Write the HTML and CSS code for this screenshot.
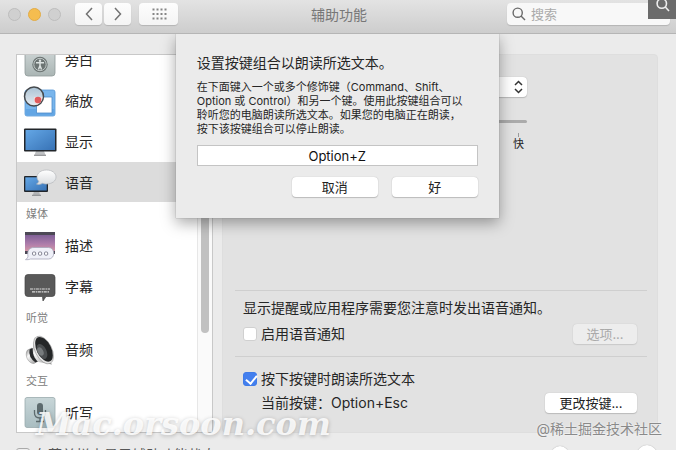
FILE: index.html
```html
<!DOCTYPE html>
<html lang="zh-CN">
<head>
<meta charset="utf-8">
<title>辅助功能</title>
<link rel="stylesheet" href="styles.css">
</head>
<body>
<div class="window">
  <header class="toolbar">
    <div class="toolbar-left">
      <div class="lights"><i class="light"></i><i class="light light-amber"></i><i class="light"></i></div>
      <div class="nav">
        <button class="tool" aria-label="后退"><svg width="8" height="14" viewBox="0 0 8 14"><path d="M7 1 1.5 7 7 13"/></svg></button>
        <button class="tool" aria-label="前进"><svg width="8" height="14" viewBox="0 0 8 14"><path d="M1 1 6.500 7 1 13"/></svg></button>
      </div>
      <button class="tool tool-grid" aria-label="显示全部">
        <svg width="16" height="12" viewBox="0 0 16 12"><path class="dots" d="M1.500 1.500h14M1.500 6h14M1.500 10.500h14"/></svg>
      </button>
    </div>
    <h1 class="title">辅助功能</h1>
    <label class="search">
      <svg width="14" height="14" viewBox="0 0 14 14"><circle cx="5.700" cy="5.700" r="4.600"/><path d="m9 9 4 4"/></svg>
      <input type="search" placeholder="搜索" aria-label="搜索">
    </label>
  </header>

  <main class="content">
    <nav class="sidebar">
      <ul class="list">
        <li class="item">
          <svg class="icon" viewBox="0 0 32 32">
            <defs><linearGradient id="steel" x2="0" y2="1"><stop stop-color="#d5dcdc"/><stop offset="1" stop-color="#aab5b4"/></linearGradient></defs>
            <rect x="1" y="1" width="30" height="31" rx="3" fill="url(#steel)" stroke="#8f9a99" stroke-width=".8"/>
            <circle cx="16" cy="20.500" r="7.700" fill="#6c7473"/><circle cx="16" cy="20.500" r="6.200" fill="none" stroke="#c1c9c8" stroke-width="1"/>
            <circle cx="16" cy="16.700" r="1.200" fill="#dce2e1"/><path d="M12 18.700h8M16 18.700v3.500M16 21.500l-1.500 4M16 21.500l1.500 4" fill="none" stroke="#dce2e1" stroke-width="1.500"/>
          </svg>
          <span>旁白</span>
        </li>
        <li class="item">
          <svg class="icon" viewBox="0 0 32 32">
            <defs><linearGradient id="lens" x2="0" y2="1"><stop stop-color="#aac2d4"/><stop offset="1" stop-color="#e8edf2"/></linearGradient></defs>
            <rect x="1" y="5" width="30" height="26" rx="2" fill="#78b5ec" stroke="#5798d5" stroke-width=".8"/>
            <path d="M1.500 24h29v6h-29z" fill="#63a6e4"/><path d="M14 12h14v16H12.500V16z" fill="#fff" stroke="#4b8cc9" stroke-width=".8"/>
            <circle cx="10" cy="11.500" r="9.500" fill="url(#lens)" stroke="#45494d" stroke-width="1.500"/>
            <path d="M10 12h8.500a9 9 0 0 1-5.500 7.500C10 18 9.500 15 10 12z" fill="#f5dcdc"/><circle cx="14" cy="15" r="3.300" fill="#df5b5d"/>
          </svg>
          <span>缩放</span>
        </li>
        <li class="item">
          <svg class="icon" viewBox="0 0 32 32">
            <defs><linearGradient id="screen" x2="1" y2="1"><stop stop-color="#64a7e6"/><stop offset="1" stop-color="#3772b5"/></linearGradient></defs>
            <path d="m12 25-1.500 4h11L20 25z" fill="#bfc1c3"/><path d="M10 28.700h12V30H10z" fill="#999b9d"/>
            <rect width="32.500" height="23" y="2.500" rx="1" fill="#22262b"/><path d="M1.500 4h29.500v20H1.500z" fill="url(#screen)"/>
          </svg>
          <span>显示</span>
        </li>
        <li class="item item-selected">
          <svg class="icon" viewBox="0 0 32 32">
            <defs><linearGradient id="bubble" x2="0" y2="1"><stop stop-color="#fff"/><stop offset="1" stop-color="#dadde0"/></linearGradient></defs>
            <path d="m10 24-1 4h7l-1-4z" fill="#b2b4b6"/><path d="M8 27.700h9V29H8z" fill="#96989a"/>
            <rect y="9" width="24" height="16" rx="1" fill="#22262b"/><path d="M1.300 10.300h21.400v13.200H1.300z" fill="url(#screen)"/>
            <path d="M22.500 3C28 3 32 6 32 10s-4 7-9.500 7c-1.500 0-3-.3-4-.7-1.700 1.200-4 1.500-6 .7 1.300-.6 2-1.600 2.300-2.700C13.600 13 13 11.500 13 10c0-4 4-7 9.500-7z" fill="url(#bubble)" stroke="#b4b8bb" stroke-width=".7"/>
          </svg>
          <span>语音</span>
        </li>
        <li class="group">媒体</li>
        <li class="item">
          <svg class="icon" viewBox="0 0 32 32">
            <defs><linearGradient id="dusk" x2="0" y2="1"><stop stop-color="#70568f"/><stop offset=".55" stop-color="#ae7dab"/><stop offset="1" stop-color="#e4a1a2"/></linearGradient></defs>
            <rect x="1" y="2" width="30" height="22" fill="url(#dusk)"/><path d="M1 2h30v3H1zM1 21h3v3H1zM28 21h3v3h-3z" fill="#4c4855"/>
            <path d="M10 17.500h14.500c7 0 7 11.500 0 11.500H6.500c-1.500.7-3 .8-5 .6 1.500-.8 2.200-2 2.500-3.300C3 21 5 17.500 10 17.500z" fill="#eff0f8" stroke="#a6a5b9" stroke-width=".8"/>
            <g fill="#fff" stroke="#777789" stroke-width=".9"><rect x="8.500" y="22" width="3.200" height="3.200" rx="1"/><rect x="14.500" y="22" width="3.200" height="3.200" rx="1"/><rect x="20.500" y="22" width="3.200" height="3.200" rx="1"/></g>
          </svg>
          <span>描述</span>
        </li>
        <li class="item">
          <svg class="icon" viewBox="0 0 32 32">
            <path d="M4 3.500h24q3 0 3 3v16q0 3-3 3h-6l-3 4.500-.5-4.500H4q-3 0-3-3v-16q0-3 3-3z" fill="#595959" stroke="#444" stroke-width=".7"/>
            <path d="M6 18h20M8 20.800h17" fill="none" stroke="#ddd" stroke-width="1.200" stroke-dasharray="3 .7 1.600 .6"/>
          </svg>
          <span>字幕</span>
        </li>
        <li class="group">听觉</li>
        <li class="item">
          <svg class="icon" viewBox="0 0 32 32">
            <defs><linearGradient id="cone" x2="1" y2="1"><stop stop-color="#777"/><stop offset=".35" stop-color="#fafafa"/><stop offset="1" stop-color="#8c8c8c"/></linearGradient></defs>
            <path d="M3.500 16 8 14l6 13-4 2.500C6 30 1 24 2.500 18z" fill="url(#cone)" stroke="#888" stroke-width=".5"/>
            <path d="M5.500 15.500Q4 23 11.500 28.500l3-1.500L8.500 14z" fill="#27292b"/>
            <path d="M9 13 11 3l17 27.500L14.500 28C10 25 8 18 9 13z" fill="url(#cone)"/>
            <ellipse cx="19.500" cy="16" rx="8.300" ry="15" transform="rotate(-27 19.500 16)" fill="#e4e4e4" stroke="#8b8b8b" stroke-width=".5"/>
            <ellipse cx="20" cy="15.300" rx="7.200" ry="13.400" transform="rotate(-27 20 15.300)" fill="#252728"/>
            <ellipse cx="18" cy="17.500" rx="4.500" ry="8" transform="rotate(-27 18 17.500)" fill="#4b4e50"/><ellipse cx="16.500" cy="17.500" rx="2.700" ry="4.500" transform="rotate(-27 16.500 17.500)" fill="#777b7d"/>
          </svg>
          <span>音频</span>
        </li>
        <li class="group">交互</li>
        <li class="item">
          <svg class="icon" viewBox="0 0 32 32">
            <defs><linearGradient id="mist" x2="0" y2="1"><stop stop-color="#c8d6d8"/><stop offset="1" stop-color="#a9bdc1"/></linearGradient></defs>
            <rect x="1" y=".5" width="30" height="30" rx="2" fill="url(#mist)" stroke="#9aabad" stroke-width=".8"/>
            <rect x="13" y="6" width="6" height="12" rx="3" fill="#5d6b6e"/><path d="M10.500 13v3q0 5 5.500 5t5.500-5v-3M16 21v3.500M12 24.500h8" fill="none" stroke="#5d6b6e" stroke-width="1.300"/>
          </svg>
          <span>听写</span>
        </li>
      </ul>
      <div class="scroll"><div class="thumb"></div></div>
    </nav>

    <section class="panel">
      <div class="voice">
        <div class="picker">
          <select aria-label="系统嗓音"><option></option></select>
          <svg width="9" height="14" viewBox="0 0 9 14"><path d="M1 5 4.500 1.500 8 5M1 9l3.500 3.500L8 9"/></svg>
        </div>
        <input class="rate" type="range" min="0" max="10" value="4" aria-label="语速">
        <div class="scale"><i class="tick"></i><span>快</span></div>
      </div>
      <div class="block notices">
        <p>显示提醒或应用程序需要您注意时发出语音通知。</p>
        <div class="row">
          <label class="check"><input type="checkbox">启用语音通知</label>
          <button class="button button-small" disabled>选项...</button>
        </div>
      </div>
      <div class="block shortcut">
        <label class="check"><input type="checkbox" checked>按下按键时朗读所选文本</label>
        <div class="row">
          <span class="current">当前按键：Option+Esc</span>
          <button class="button button-wide">更改按键...</button>
        </div>
      </div>
    </section>
  </main>

  <footer class="footer">
    <label class="check"><input type="checkbox">在菜单栏中显示辅助功能状态</label>
    <div class="rounds"><i class="round"></i><button class="round round-large" aria-label="帮助"></button></div>
  </footer>

  <form class="dialog" role="dialog" aria-labelledby="ask">
    <h2 id="ask">设置按键组合以朗读所选文本。</h2>
    <p>在下面键入一个或多个修饰键（Command、Shift、<br>Option 或 Control）和另一个键。使用此按键组合可以<br>聆听您的电脑朗读所选文本。如果您的电脑正在朗读，<br>按下该按键组合可以停止朗读。</p>
    <input class="keys" type="text" value="Option+Z" aria-label="按键组合">
    <div class="actions">
      <button class="button" type="button">取消</button>
      <button class="button" type="button">好</button>
    </div>
  </form>

  <div class="corner"><svg width="14" height="14" viewBox="0 0 14 14"><circle cx="5.800" cy="5.500" r="4.700"/><path d="m9.300 9 3.700 4"/></svg></div>
  <div class="site-mark">Mac.orsoon.com</div>
  <div class="author-mark">@稀土掘金技术社区</div>
</div>
</body>
</html>
```
FILE: styles.css
```css
* { box-sizing: border-box; }
body {
  margin: 0;
  color: #262626;
  font: 14px/20px Inter, "Noto Sans CJK SC", sans-serif;
}
h1, h2, p, ul { margin: 0; padding: 0; font-weight: 400; }
button, input, select { font: inherit; color: inherit; margin: 0; }
svg { flex: none; }

.window {
  position: relative;
  height: 100vh;
  overflow: hidden;
  background: #ebebeb;
}

.toolbar {
  display: grid;
  grid-template-columns: 1fr auto 1fr;
  padding: 3px 6px 8px 8px;
  background: linear-gradient(#e3e3e3, #cdcdcd);
  border-bottom: 1px solid #b5b5b5;
}
.toolbar-left, .lights, .nav { display: flex; align-items: center; }
.lights { gap: 7px; margin-right: 14px; }
.light {
  width: 13px;
  height: 13px;
  border: 1px solid #bdbdbd;
  border-radius: 50%;
  background: #d0d0d0;
}
.light-amber { background: #f5bd4f; border-color: #e2ac47; }
.nav { gap: 2px; margin-right: 8px; }
.tool {
  display: grid;
  place-items: center;
  width: 27px;
  height: 22px;
  padding: 0;
  border: 0;
  border-radius: 4px;
  background: linear-gradient(#fdfdfd, #f4f4f4);
  box-shadow: 0 1px 1px #b4b4b4;
}
.tool svg { fill: none; stroke: #727272; stroke-width: 1.5; }
.tool-grid { width: 39px; }
.tool .dots { stroke: #858585; stroke-width: 2; stroke-dasharray: 2 2; }
.title { font-size: 14px; line-height: 24px; height: 22px; color: #777; }
.search {
  justify-self: end;
  display: flex;
  align-items: center;
  gap: 5px;
  width: 163px;
  height: 22px;
  padding: 0 5px;
  border-radius: 4px;
  background: #f8f8f8;
  box-shadow: 0 1px 1px #b4b4b4;
}
.search svg { fill: none; stroke: #696969; stroke-width: 1.4; }
.search input {
  flex: 1;
  min-width: 0;
  padding: 0;
  border: 0;
  outline: 0;
  background: none;
  font-size: 13px;
}
.search input::placeholder { color: #aaa; }

.content { display: flex; gap: 9px; padding: 20px 18px 0 16px; }
.sidebar {
  display: flex;
  flex: none;
  width: 197px;
  overflow: hidden;
  border: 1px solid #c8c8c8;
  background: #fff;
}
.list {
  display: flex;
  flex: 1;
  flex-direction: column;
  gap: 1px;
  margin-top: -16px;
  list-style: none;
}
.item { display: flex; align-items: center; gap: 9px; height: 40px; padding: 2px 0 0 7px; }
.item-selected { background: #dcdcdc; }
.icon { width: 32px; height: 32px; overflow: visible; }
.group { height: 21px; padding-left: 9px; color: #808080; font-size: 11px; line-height: 23px; }
.scroll { width: 15px; padding-left: 3px; border-left: 1px solid #e7e7e7; background: #fafafa; }
.thumb { width: 8px; height: 278px; border-radius: 4px; background: #c1c1c1; }

.panel {
  flex: 1;
  padding: 0 10px 0 12px;
  border: 1px solid #dedede;
  border-radius: 4px;
  background: #e2e2e2;
}
.voice {
  display: flex;
  flex-direction: column;
  min-height: 235px;
  padding: 22px 120px 0 80px;
}
.picker { position: relative; display: flex; }
.picker select {
  flex: 1;
  height: 20px;
  appearance: none;
  border: 0;
  border-radius: 4px;
  background: #fff;
  box-shadow: 0 0 1px #aaa, 0 1px 1px #bbb;
}
.picker svg { position: absolute; top: 3px; right: 4px; fill: none; stroke: #333; stroke-width: 1.5; }
.rate { height: 3px; margin-top: 23px; appearance: none; border-radius: 2px; background: #ababab; }
.rate::-webkit-slider-thumb { appearance: none; width: 8px; height: 16px; border-radius: 4px; background: #fff; }
.scale {
  display: flex;
  flex-direction: column;
  align-items: center;
  align-self: flex-end;
  margin: 10px 3px 0;
  font-size: 11px;
  line-height: 14px;
}
.tick { width: 1px; height: 4px; background: #999; }

.block {
  display: flex;
  flex-direction: column;
  border-top: 1px solid #cfcfcf;
  padding-right: 10px;
  padding-left: 8px;
}
.notices { gap: 6px; padding-top: 7px; padding-bottom: 12px; }
.shortcut { gap: 4px; padding-top: 12px; padding-bottom: 19px; }
.row { display: flex; align-items: center; justify-content: space-between; }
.check { display: flex; align-items: center; gap: 4px; }
.check input {
  appearance: none;
  width: 14px;
  height: 14px;
  border: 1px solid #d0d0d0;
  border-radius: 3px;
  background: #fff;
}
.check input:checked { border-color: #3f7be8; background: #437fee; }
.check input:checked::after {
  content: "";
  display: block;
  width: 5px;
  height: 9px;
  margin: 0 0 0 4px;
  border: solid #fff;
  border-width: 0 2px 2px 0;
  transform: rotate(40deg);
}
.current { padding-left: 18px; }
.button {
  width: 86px;
  height: 20px;
  padding: 0;
  border: 0;
  border-radius: 4px;
  background: #fff;
  box-shadow: 0 0 1px #aaa, 0 1px 1px #bdbdbd;
  color: #222;
  font-size: 13px;
}
.button-small { width: 64px; }
.button-wide { width: 92px; }
.button:disabled { background: #ededed; color: #aaa; box-shadow: 0 0 1px #bbb, 0 1px 1px #ccc; }

.footer { display: flex; justify-content: space-between; padding: 12px 19px 0 16px; }
.footer .check { color: #555; }
.footer .check input { border-color: #aaa; background: #eee; }
.rounds { display: flex; align-items: center; gap: 68px; }
.round { width: 18px; height: 18px; padding: 0; border: 0; border-radius: 50%; background: #fff; box-shadow: 0 0 1px #999; }
.round-large { width: 20px; height: 20px; }

.dialog {
  position: absolute;
  top: 34px;
  left: 26%;
  width: 323px;
  padding: 19px 21px 21px;
  background: #ebebeb;
  box-shadow: 0 0 1px #888, 0 5px 14px #00000059;
  clip-path: inset(0 -30px -40px -30px);
}
.dialog h2 { font-size: 14px; line-height: 20px; }
.dialog p { margin-top: 7px; font-size: 11px; line-height: 14px; white-space: nowrap; }
.keys {
  display: block;
  width: 100%;
  height: 21px;
  margin-top: 9px;
  padding: 0;
  border: 1px solid #c4c4c4;
  background: #fff;
  color: #111;
  font-size: 13px;
  text-align: center;
}
.actions { display: flex; justify-content: flex-end; gap: 14px; margin-top: 11px; }

.corner {
  position: absolute;
  top: 0;
  right: 0;
  width: 28px;
  height: 19px;
  padding-left: 8px;
  background: #6b6b6b;
}
.corner svg { display: block; margin-top: -2px; fill: none; stroke: #eee; stroke-width: 1.6; }
.site-mark {
  position: absolute;
  bottom: 6px;
  left: 36px;
  color: #fffd;
  font: italic 700 32px/40px "DejaVu Serif", serif;
  text-shadow: 0 1px 4px #0004;
}
.author-mark {
  position: absolute;
  right: 14px;
  bottom: 11px;
  color: #8a8a8a;
  text-shadow: 0 0 2px #fff;
}
```
